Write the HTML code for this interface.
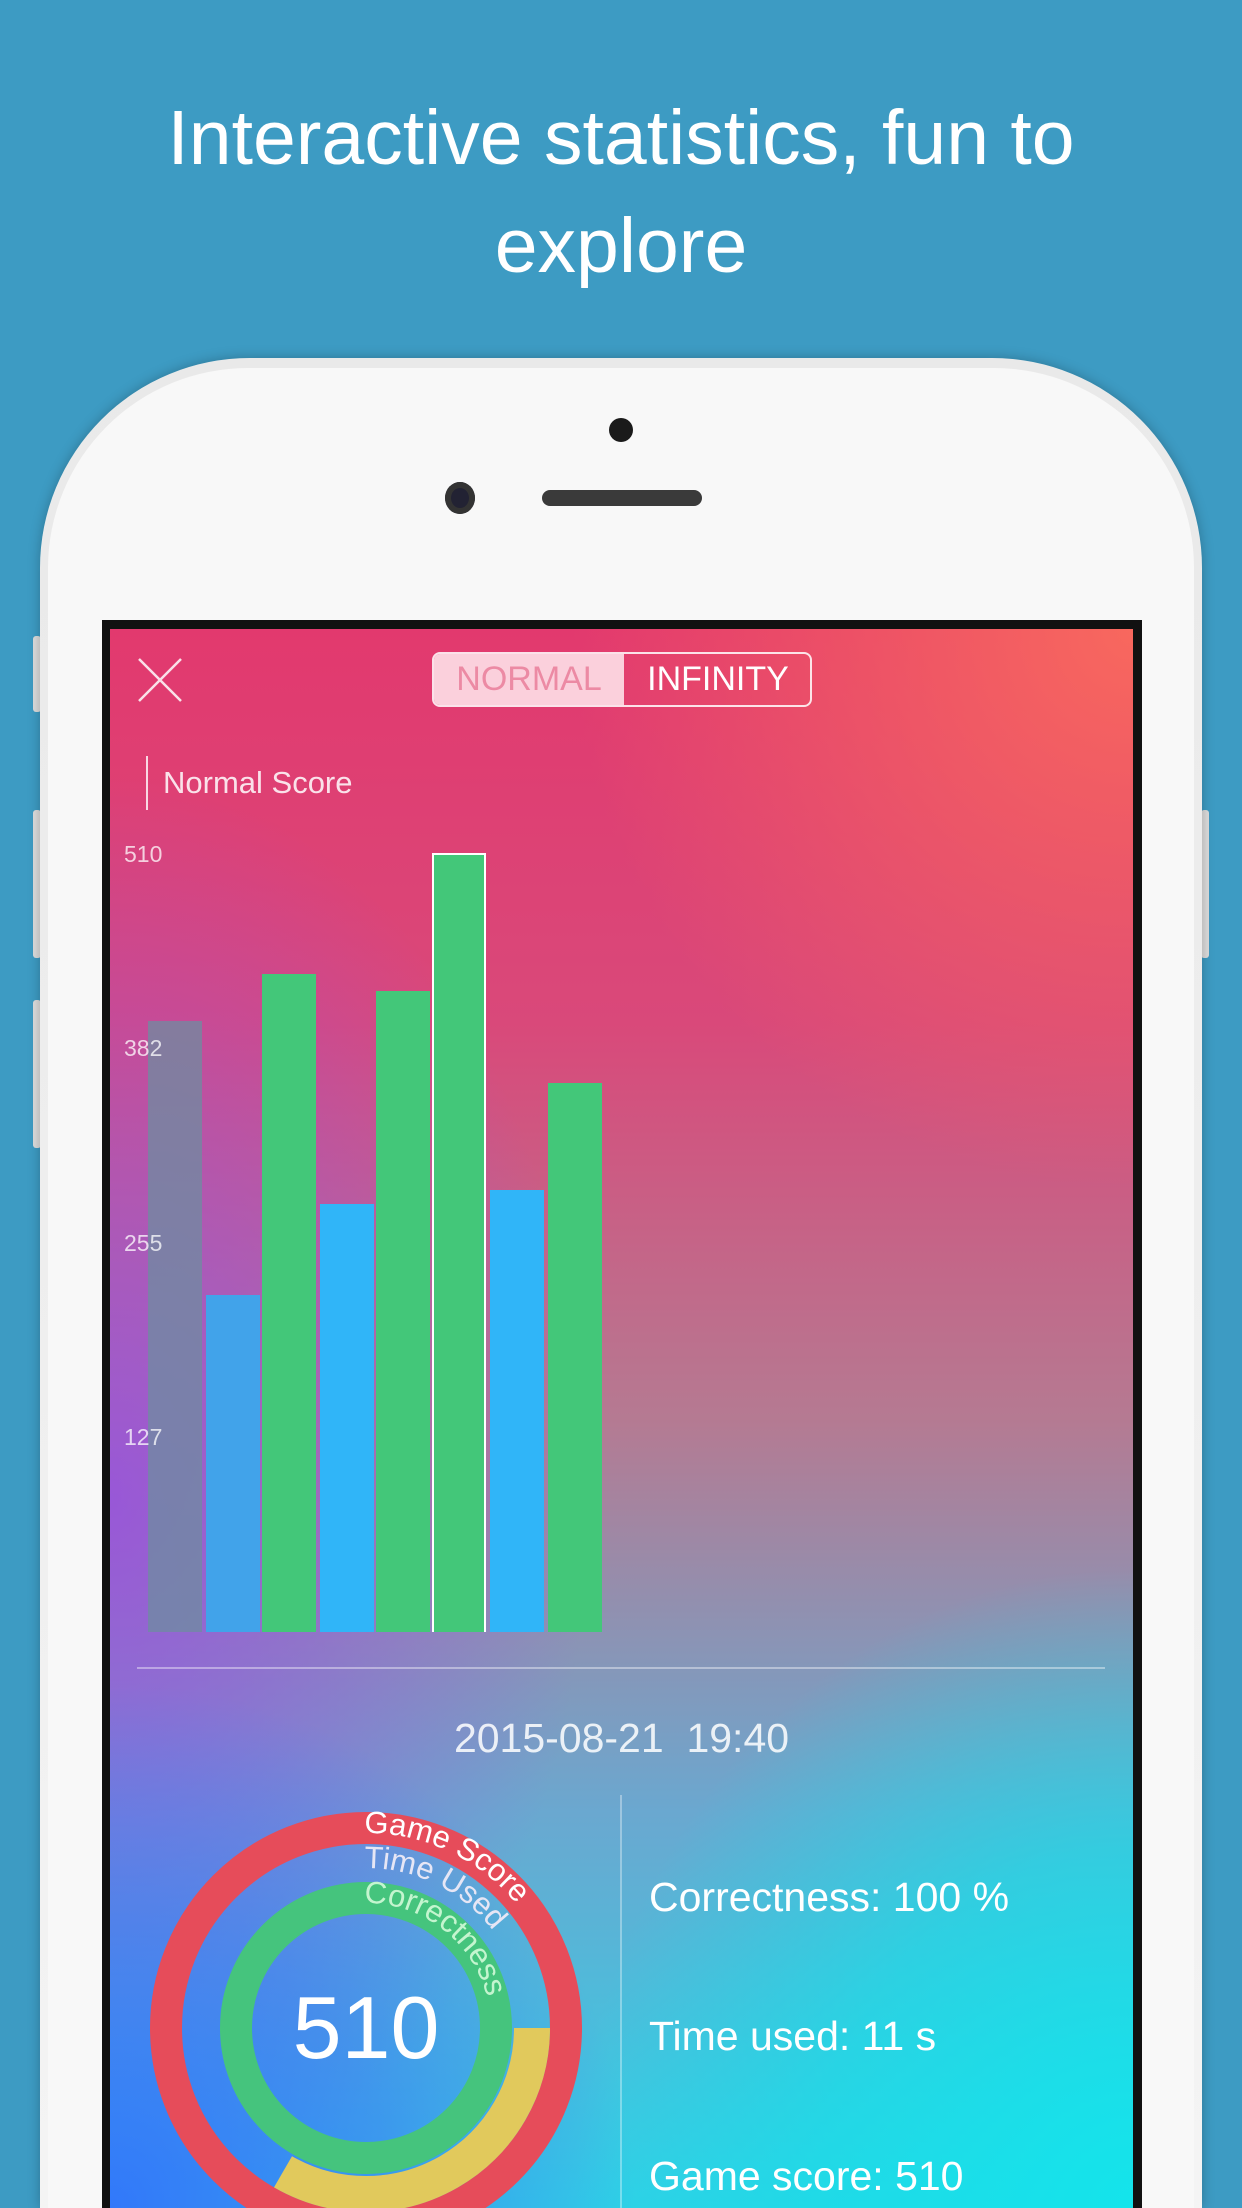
<!DOCTYPE html>
<html style="width:1242px;height:2208px;overflow:hidden"><head><meta charset="utf-8"><style>
*{margin:0;padding:0;box-sizing:border-box}
html,body{width:1242px;height:2208px;overflow:hidden}
body{background:#3d9bc3;font-family:"Liberation Sans",sans-serif;position:relative}
.wrap{position:absolute;left:0;top:0;width:1242px;height:2208px;overflow:hidden}
.title{position:absolute;top:84px;left:0;width:1242px;text-align:center;color:#fff;font-size:77px;line-height:108px;font-weight:300}
.phone{position:absolute;left:40px;top:358px;width:1162px;height:1850px;border-radius:210px 210px 0 0;background:linear-gradient(#e9e9e9,#f4f4f4);box-shadow:0 0 12px rgba(0,0,0,.25)}
.phone-in{position:absolute;left:8px;top:10px;right:8px;bottom:0;border-radius:200px 200px 0 0;background:#f8f8f8}
.btn{position:absolute;width:8px;background:#dcdcdc;border-radius:3px}
.screen{position:absolute;left:102px;top:620px;width:1040px;height:1588px;background:#111;}
.scr{position:absolute;left:110px;top:629px;width:1023px;height:1579px;overflow:hidden;
background:
radial-gradient(ellipse 700px 700px at 0% 100%, rgba(50,120,250,1) 0%, rgba(60,120,245,0.6) 40%, rgba(60,120,245,0) 75%),
radial-gradient(ellipse 700px 800px at 100% 100%, rgba(20,228,235,1) 0%, rgba(20,225,232,0.6) 45%, rgba(20,225,232,0) 80%),
radial-gradient(ellipse 600px 900px at 0% 55%, rgba(150,80,225,0.85) 0%, rgba(150,80,225,0) 80%),
radial-gradient(ellipse 700px 700px at 100% 0%, rgba(248,104,94,1) 0%, rgba(248,104,94,0) 80%),
linear-gradient(180deg,#e2396e 0%,#d9497a 25%,#b57a92 50%,#6aa8d0 75%,#30d0e6 100%);}
.lbl{position:absolute;color:rgba(255,255,255,.75);font-size:23px}
.bar{position:absolute;width:54px;bottom:0}
.txt{position:absolute;color:#fff;font-size:41px;white-space:nowrap}
</style></head><body><div class="wrap">
<div class="title">Interactive statistics, fun to<br>explore</div>
<div class="btn" style="left:33px;top:636px;height:76px"></div>
<div class="btn" style="left:33px;top:810px;height:148px"></div>
<div class="btn" style="left:33px;top:1000px;height:148px"></div>
<div class="btn" style="left:1201px;top:810px;height:148px"></div>
<div class="phone"><div class="phone-in"></div></div>
<div style="position:absolute;left:609px;top:418px;width:24px;height:24px;border-radius:50%;background:#1a1a1a"></div>
<div style="position:absolute;left:445px;top:482px;width:30px;height:32px;border-radius:50%;background:#223;box-shadow:inset 0 0 0 6px #333"></div>
<div style="position:absolute;left:542px;top:490px;width:160px;height:16px;border-radius:8px;background:#3a3a3a"></div>
<div class="screen"></div>
<div class="scr">
  <svg style="position:absolute;left:27px;top:28px" width="46" height="46"><path d="M2 2L44 44M44 2L2 44" stroke="#fff" stroke-width="2.5" opacity=".85"/></svg>
  <div style="position:absolute;left:322px;top:23px;width:380px;height:55px;border:2px solid rgba(255,255,255,.85);border-radius:8px;overflow:hidden">
    <div style="position:absolute;left:0;top:0;width:190px;height:100%;background:#fbd0dc;color:#ec8aa4;font-size:34px;line-height:51px;text-align:center">NORMAL</div>
    <div style="position:absolute;left:190px;top:0;width:188px;height:100%;color:#fff;font-size:34px;line-height:51px;text-align:center">INFINITY</div>
  </div>
  <div style="position:absolute;left:36px;top:127px;width:2px;height:54px;background:rgba(255,255,255,.8)"></div>
  <div class="lbl" style="left:53px;top:136px;font-size:31px;color:rgba(255,255,255,.85)">Normal Score</div>
  <div style="position:absolute;left:0;top:0;width:1023px;height:1003px">
    <div class="bar" style="left:38px;height:611px;background:rgba(110,140,160,.75)"></div>
    <div class="bar" style="left:96px;height:337px;background:#41a3ea"></div>
    <div class="bar" style="left:152px;height:658px;background:#43c779"></div>
    <div class="bar" style="left:210px;height:428px;background:#30b5f8"></div>
    <div class="bar" style="left:266px;height:641px;background:#43c779"></div>
    <div class="bar" style="left:322px;height:779px;background:#43c779;border:2px solid #fff;border-bottom:none"></div>
    <div class="bar" style="left:380px;height:442px;background:#30b5f8"></div>
    <div class="bar" style="left:438px;height:549px;background:#43c779"></div>
  </div>
  <div class="lbl" style="left:14px;top:212px">510</div>
  <div class="lbl" style="left:14px;top:406px">382</div>
  <div class="lbl" style="left:14px;top:601px">255</div>
  <div class="lbl" style="left:14px;top:795px">127</div>
  <div style="position:absolute;left:27px;top:1038px;width:968px;height:2px;background:rgba(255,255,255,.4)"></div>
  <div class="txt" style="left:0;width:1023px;text-align:center;top:1086px;color:rgba(255,255,255,.85)">2015-08-21&nbsp;&nbsp;19:40</div>
  <div style="position:absolute;left:510px;top:1166px;width:2px;height:420px;background:rgba(255,255,255,.35)"></div>
  <div class="txt" style="left:539px;top:1245px">Correctness: 100 %</div>
  <div class="txt" style="left:539px;top:1384px">Time used: 11 s</div>
  <div class="txt" style="left:539px;top:1524px">Game score: 510</div>
  <svg style="position:absolute;left:0;top:1150px" width="520" height="429">
    <g transform="translate(256,249)">
      <defs>
        <path id="pr" d="M-2,-195 A195,195 0 0 1 195,0"/>
        <path id="pt" d="M-2,-160 A160,160 0 0 1 160,0"/>
        <path id="pc" d="M-2,-125 A125,125 0 0 1 125,0"/>
      </defs>
      <circle r="200" fill="none" stroke="#e64c5a" stroke-width="32"/>
      <circle r="130" fill="none" stroke="#45c47d" stroke-width="32"/>
      <path d="M166,0 A166,166 0 0 1 -83,143.8" fill="none" stroke="#e1c95c" stroke-width="36"/>
      <text font-size="31" fill="#fff" font-family="Liberation Sans,sans-serif"><textPath href="#pr">Game Score</textPath></text>
      <text font-size="31" fill="#e6e6f5" font-family="Liberation Sans,sans-serif"><textPath href="#pt">Time Used</textPath></text>
      <text font-size="31" fill="#c4f5cf" font-family="Liberation Sans,sans-serif"><textPath href="#pc">Correctness</textPath></text>
      <text x="0" y="30" text-anchor="middle" font-size="88" fill="#fff" font-family="Liberation Sans,sans-serif">510</text>
    </g>
  </svg>
</div>
</div></body></html>
